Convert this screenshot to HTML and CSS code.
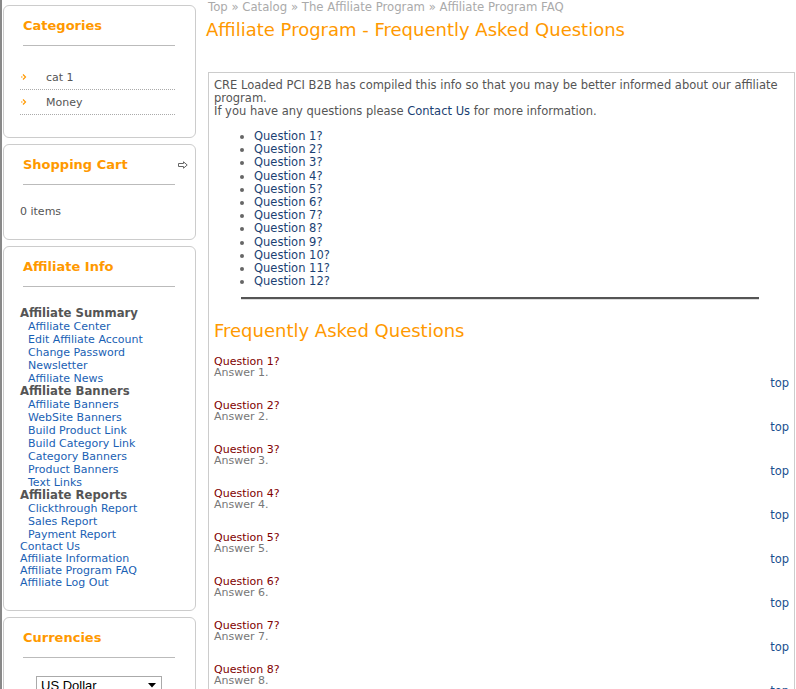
FILE: index.html
```html
<!DOCTYPE html>
<html>
<head>
<meta charset="utf-8">
<link rel="stylesheet" href="styles.css">
</head>
<body>
<div class="page">
  <aside class="sidebar">
    <section class="box box-cat">
      <h3 class="box-title">Categories</h3>
      <ul class="cat-list">
        <li><svg class="cat-arrow" width="6" height="6" viewBox="0 0 6 6"><path d="M2 0.5 L4.5 3 L2 5.5" fill="none" stroke="#f90" stroke-width="1.2"/><rect x="0" y="2.5" width="1.5" height="1" fill="#f90"/></svg><a>cat 1</a></li>
        <li><svg class="cat-arrow" width="6" height="6" viewBox="0 0 6 6"><path d="M2 0.5 L4.5 3 L2 5.5" fill="none" stroke="#f90" stroke-width="1.2"/><rect x="0" y="2.5" width="1.5" height="1" fill="#f90"/></svg><a>Money</a></li>
      </ul>
    </section>
    <section class="box box-cart">
      <div class="title-row">
        <h3 class="box-title">Shopping Cart</h3>
        <svg class="cart-arrow" width="10" height="8" viewBox="0 0 10 8"><path d="M0.5 2.5 H5.5 V0.8 L9.2 4 L5.5 7.2 V5.5 H0.5 Z" fill="#fff" stroke="#666" stroke-width="1"/></svg>
      </div>
      <p class="cart-text">0 items</p>
    </section>
    <section class="box box-aff">
      <h3 class="box-title">Affiliate Info</h3>
      <div class="aff-menu">
        <div class="aff-head">Affiliate Summary</div>
        <a class="aff-sub">Affiliate Center</a>
        <a class="aff-sub">Edit Affiliate Account</a>
        <a class="aff-sub">Change Password</a>
        <a class="aff-sub">Newsletter</a>
        <a class="aff-sub">Affiliate News</a>
        <div class="aff-head">Affiliate Banners</div>
        <a class="aff-sub">Affiliate Banners</a>
        <a class="aff-sub">WebSite Banners</a>
        <a class="aff-sub">Build Product Link</a>
        <a class="aff-sub">Build Category Link</a>
        <a class="aff-sub">Category Banners</a>
        <a class="aff-sub">Product Banners</a>
        <a class="aff-sub">Text Links</a>
        <div class="aff-head">Affiliate Reports</div>
        <a class="aff-sub">Clickthrough Report</a>
        <a class="aff-sub">Sales Report</a>
        <a class="aff-sub">Payment Report</a>
        <a class="aff-top">Contact Us</a>
        <a class="aff-top">Affiliate Information</a>
        <a class="aff-top">Affiliate Program FAQ</a>
        <a class="aff-top">Affiliate Log Out</a>
      </div>
    </section>
    <section class="box box-cur">
      <h3 class="box-title">Currencies</h3>
      <div class="select"><span>US Dollar</span><svg width="8" height="5" viewBox="0 0 8 5"><path d="M0 0 H8 L4 4.5 Z" fill="#000"/></svg></div>
    </section>
  </aside>
  <main class="main">
    <div class="crumbs">Top » Catalog » The Affiliate Program » Affiliate Program FAQ</div>
    <h1 class="page-title">Affiliate Program - Frequently Asked Questions</h1>
    <div class="content">
      <p class="intro">CRE Loaded PCI B2B has compiled this info so that you may be better informed about our affiliate program.<br>If you have any questions please <a class="link">Contact Us</a> for more information.</p>
      <ul class="q-list">
        <li><a>Question 1?</a></li>
        <li><a>Question 2?</a></li>
        <li><a>Question 3?</a></li>
        <li><a>Question 4?</a></li>
        <li><a>Question 5?</a></li>
        <li><a>Question 6?</a></li>
        <li><a>Question 7?</a></li>
        <li><a>Question 8?</a></li>
        <li><a>Question 9?</a></li>
        <li><a>Question 10?</a></li>
        <li><a>Question 11?</a></li>
        <li><a>Question 12?</a></li>
      </ul>
      <hr class="rule">
      <h2 class="faq-title">Frequently Asked Questions</h2>
      <div class="faq">
        <div class="qa"><div class="q">Question 1?</div><div class="a">Answer 1.</div><a class="top">top</a></div>
        <div class="qa"><div class="q">Question 2?</div><div class="a">Answer 2.</div><a class="top">top</a></div>
        <div class="qa"><div class="q">Question 3?</div><div class="a">Answer 3.</div><a class="top">top</a></div>
        <div class="qa"><div class="q">Question 4?</div><div class="a">Answer 4.</div><a class="top">top</a></div>
        <div class="qa"><div class="q">Question 5?</div><div class="a">Answer 5.</div><a class="top">top</a></div>
        <div class="qa"><div class="q">Question 6?</div><div class="a">Answer 6.</div><a class="top">top</a></div>
        <div class="qa"><div class="q">Question 7?</div><div class="a">Answer 7.</div><a class="top">top</a></div>
        <div class="qa"><div class="q">Question 8?</div><div class="a">Answer 8.</div><a class="top">top</a></div>
      </div>
    </div>
  </main>
</div>
</body>
</html>
```
FILE: styles.css
```css
html, body { margin: 0; padding: 0; background: #fff; }
body {
  font-family: "DejaVu Sans", Verdana, sans-serif;
  font-size: 11px;
  color: #555;
  border-left: 2px solid #888;
  min-height: 689px;
  box-sizing: border-box;
  overflow: hidden;
}
a { text-decoration: none; cursor: pointer; }
.page { display: flex; align-items: flex-start; padding-left: 1px; }
.sidebar {
  width: 193px;
  flex: none;
  display: flex;
  flex-direction: column;
  gap: 6px;
  padding-top: 5px;
}
.box {
  border: 1px solid #ccc;
  border-radius: 6px;
  padding: 0 20px 0 16px;
}
.box-title {
  margin: 0 0 0 3px;
  color: #f90;
  font-size: 13px;
  font-weight: bold;
  line-height: 16px;
  padding-bottom: 11px;
  border-bottom: 1px solid #bbb;
}
.box-cat { padding-top: 12px; height: 119px; }
.cat-list { list-style: none; margin: 19px 0 0 0; padding: 0; }
.cat-list li {
  display: flex; align-items: center;
  height: 24px;
  border-bottom: 1px dotted #aaa;
  color: #555;
}
.cat-arrow { margin: 0 19px 0 1px; }
.box-cart { padding-top: 12px; height: 82px; }
.title-row { position: relative; }
.cart-arrow { position: absolute; right: -13px; top: 4px; }
.cart-text { margin: 20px 0 0 0; }
.box-aff { padding-top: 12px; height: 351px; }
.aff-menu { display: flex; flex-direction: column; margin-top: 20px; }
.aff-head { font-weight: bold; font-size: 11.7px; line-height: 13px; color: #555; }
.aff-sub { color: #1a5fb4; font-size: 11px; line-height: 13px; padding-left: 8px; }
.aff-top { color: #1a5fb4; font-size: 11px; line-height: 12px; }
.box-cur { padding-top: 12px; height: 80px; }
.select {
  margin: 18px 0 0 16px;
  width: 126px; height: 18px;
  border: 1px solid #aaa;
  display: flex; align-items: center; justify-content: space-between;
  padding: 0 5px 0 4px;
  box-sizing: border-box;
  font-family: "Liberation Sans", Arial, sans-serif;
  font-size: 13px; color: #000;
}
.main { flex: 1; padding-left: 10px; min-width: 0; }
.crumbs { color: #aaa; font-size: 11.7px; line-height: 14px; margin: 0 0 0 2px; padding-top: 0; }
.page-title { margin: 5px 0 0 0; color: #f90; font-size: 18px; font-weight: normal; line-height: 22px; }
.content {
  margin: 31px 1px 0 2px;
  border: 1px solid #ccc;
  padding: 6px 5px 0 5px;
  font-size: 11px;
  line-height: 13px;
  color: #555;
}
.intro { margin: 0; font-size: 11.5px; }
.link { color: #1b3f73; }
.q-list { margin: 12px 0 0 0; padding-left: 40px; }
.q-list li { color: #666; line-height: 13.2px; font-size: 11.5px; }
.q-list a { color: #1b3f73; }
.rule { margin: 9px 30px 0 27px; border: none; border-top: 2px solid #555; border-bottom: 1px solid #ddd; }
.faq-title { margin: 20px 0 0 0; color: #f90; font-size: 18px; font-weight: normal; line-height: 22px; }
.faq { margin-top: 14px; }
.qa { display: flex; flex-direction: column; height: 44px; }
.q { color: #800000; font-size: 11px; line-height: 11px; }
.a { color: #777; font-size: 11px; line-height: 11px; }
.top { color: #1b4f8f; align-self: flex-end; line-height: 11px; font-size: 11.5px; }
```
